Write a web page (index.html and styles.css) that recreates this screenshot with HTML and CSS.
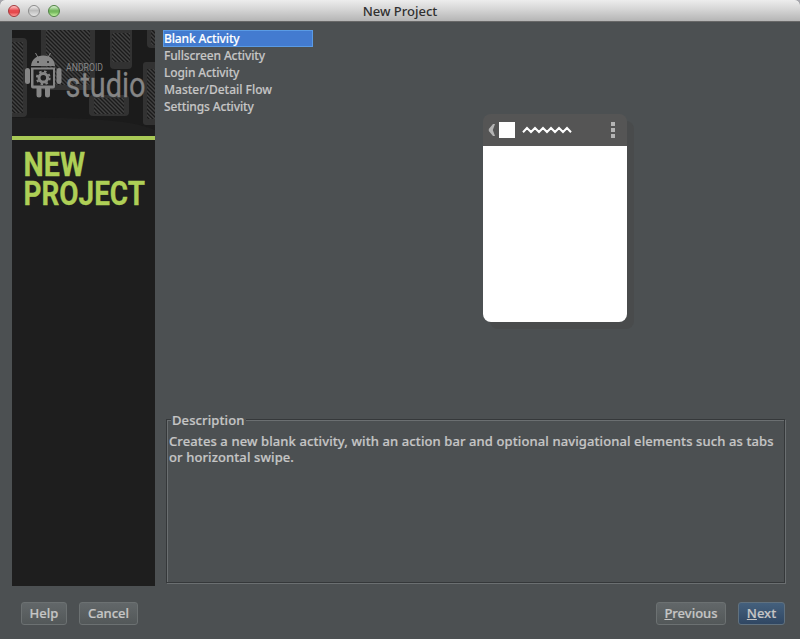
FILE: index.html
```html
<!DOCTYPE html>
<html lang="en">
<head>
<meta charset="utf-8">
<title>New Project</title>
<link rel="stylesheet" href="styles.css">
</head>
<body>
<div class="window">
  <header class="titlebar">
    <div class="lights"><i class="light red"></i><i class="light gray"></i><i class="light green"></i></div>
    <h1 class="title">New Project</h1>
  </header>
  <main class="content">
    <aside class="banner">
      <svg width="143" height="190" viewBox="12 30 143 190">
        <defs>
          <pattern id="hatch" width="4" height="4" patternUnits="userSpaceOnUse">
            <rect width="4" height="4" fill="#1b1b1b"/>
            <path d="M-1 -1L5 5M-1 3L1 5M3 -1L5 1" stroke="#424242" stroke-width="1.4"/>
          </pattern>
        </defs>
        <rect x="12" y="30" width="143" height="106" fill="#1b1b1b"/>
        <path d="M12 118Q90 117 130 123Q145 126 155 130V136H12Z" fill="#1f1f1f"/>
        <g fill="#323232">
          <rect x="2" y="38" width="25" height="79" rx="4"/>
          <rect x="41" y="22" width="54" height="68" rx="4"/>
          <rect x="110" y="22" width="22" height="47" rx="4"/>
          <rect x="147" y="22" width="20" height="26" rx="4"/>
          <rect x="89" y="95" width="40" height="21" rx="4"/>
          <rect x="143" y="62" width="20" height="63" rx="3"/>
        </g>
        <g fill="url(#hatch)">
          <rect x="12" y="42" width="11" height="71"/>
          <rect x="46" y="30" width="44" height="55"/>
          <rect x="112" y="33" width="18" height="29"/>
          <rect x="151" y="30" width="4" height="15"/>
          <rect x="94" y="98" width="30" height="16"/>
          <rect x="147" y="69" width="8" height="50"/>
        </g>
        <g fill="#858585">
          <path d="M31 66C31.500 59.500 36.500 55.500 43.300 55.500S54.500 59.500 55 66Z"/>
          <path d="M35.500 53L38 57.500M50.500 53L48 57.500" stroke="#858585" fill="none"/>
          <rect x="25" y="68" width="5" height="16" rx="2.500"/>
          <rect x="56.500" y="68" width="5" height="16" rx="2.500"/>
          <path d="M31 67.500H55V86.500Q55 88.500 53 88.500H50V95Q50 97.500 47.500 97.500T45 95V88.500H41.500V95Q41.500 97.500 39 97.500T36.500 95V88.500H33Q31 88.500 31 86.500Z"/>
        </g>
        <rect x="33.500" y="69.500" width="19.500" height="16" fill="#202020"/>
        <circle cx="43.300" cy="77.800" r="4.300" fill="none" stroke="#858585" stroke-width="3"/>
        <circle cx="43.300" cy="77.800" r="6.400" fill="none" stroke="#858585" stroke-width="2" stroke-dasharray="2.5 2.5265"/>
        <circle cx="38" cy="62" r="1" fill="#222"/><circle cx="48" cy="62" r="1" fill="#222"/>
        <text class="brand-small" x="66" y="71" textLength="37" lengthAdjust="spacingAndGlyphs">ANDROID</text>
        <text class="brand-large" x="65.500" y="97" textLength="80" lengthAdjust="spacingAndGlyphs">studio</text>
        <rect x="12" y="136" width="143" height="4" fill="#a9c956"/>
        <text class="heading" x="23.500" y="176" textLength="61.500" lengthAdjust="spacingAndGlyphs">NEW</text>
        <text class="heading" x="23.500" y="205" textLength="121.500" lengthAdjust="spacingAndGlyphs">PROJECT</text>
      </svg>
    </aside>
    <section class="body">
      <div class="top">
        <ul class="list">
          <li class="selected">Blank Activity</li>
          <li>Fullscreen Activity</li>
          <li>Login Activity</li>
          <li class="wide">Master/Detail Flow</li>
          <li>Settings Activity</li>
        </ul>
        <div class="preview">
          <svg class="phone-bar" width="144" height="32" viewBox="483 114 144 32">
            <path d="M493 124H495L492.800 130L495 136H493L488.800 131V129Z" fill="#b4b4b4"/>
            <rect x="499" y="122" width="16" height="16" fill="#fff"/>
            <path d="M523 132.300L527 128L531 132L535 128L539 132L543 128L547 132L551 128L555 132L559 128L563 132L567 128L571 132.300" fill="none" stroke="#fff" stroke-width="2"/>
            <path d="M611 122h4v4h-4zM611 128h4v4h-4zM611 134h4v4h-4z" fill="#b4b4b4"/>
          </svg>
        </div>
      </div>
      <section class="description">
        <h2>Description</h2>
        <p>Creates a new blank activity, with an action bar and optional navigational elements such as tabs<br>or horizontal swipe.</p>
      </section>
    </section>
  </main>
  <footer class="actions">
    <button class="help">Help</button>
    <button class="cancel">Cancel</button>
    <span class="spacer"></span>
    <button class="previous"><u>P</u>revious</button>
    <button class="next"><u>N</u>ext</button>
  </footer>
</div>
</body>
</html>
```
FILE: styles.css
```css
* { box-sizing: border-box; }
body { margin: 0; background: #a6a6ae; font: 500 13px/16px "Noto Sans", "Open Sans", sans-serif; color: #c6c6c6; }
.window { width: 800px; height: 639px; display: flex; flex-direction: column; background: #4c5052; border-radius: 5px 5px 0 0; overflow: hidden; }
.titlebar { height: 22px; display: grid; grid-template-columns: 1fr auto 1fr; align-items: center; background: linear-gradient(#ededed, #d8d8d8 40%, #b5b5b5); border-bottom: 1px solid #686868; }
.lights { display: flex; gap: 8px; padding-left: 8px; }
.light { width: 12px; height: 12px; border-radius: 50%; border: 1px solid #777; }
.red { background: linear-gradient(#ffc9c9, #e84b50 45%, #e5484c 65%, #ff9c98); border-color: #a3373b; }
.gray { background: linear-gradient(#eee, #bdbdbd 45%, #e4e4e4); border-color: #8b8b8b; }
.green { background: linear-gradient(#e0f5d8, #78b962 45%, #75b95c 60%, #c5f5a5); border-color: #4e8142; }
.title { margin: 0; font-size: 13px; line-height: 20px; font-weight: 500; color: #303030; }
.content { height: 564px; display: flex; padding: 8px 14px 0 12px; gap: 8px; }
.banner { width: 143px; height: 556px; background: #1e1e1e; }
.banner svg { display: block; }
.brand-small { font: 400 10.5px Roboto, sans-serif; fill: #858585; }
.brand-large { font: 400 35px Roboto, sans-serif; fill: #858585; stroke: #858585; stroke-width: 0.3px; }
.heading { font: 700 33px Roboto, sans-serif; fill: #aecf56; stroke: #aecf56; stroke-width: 0.3px; }
.body { flex: 1; display: flex; flex-direction: column; }
.top { height: 382px; display: flex; }
.list { width: 150px; margin: 0; padding: 0; list-style: none; font-size: 12px; letter-spacing: -0.13px; -webkit-text-stroke: 0.15px; }
.list li { height: 17px; line-height: 17px; padding-left: 1px; white-space: nowrap; }
.list .wide { letter-spacing: 0; }
.list .selected { color: #fff; background: #437bd0; border: 1px solid #5a9be5; padding-left: 0; line-height: 16px; }
.preview { width: 144px; height: 208px; margin: 84px 0 0 170px; border-radius: 8px; background: linear-gradient(#555 32px, #fff 32px); box-shadow: 7px 7px 0 #494b4c; }
.phone-bar { display: block; }
.description { width: 619px; height: 164px; margin: 7px 0 0 3px; border: 1px solid #35383a; box-shadow: inset 1px 1px 0 #6b6f71, 1px 1px 0 #6b6f71; white-space: nowrap; letter-spacing: 0.105px; -webkit-text-stroke: 0.2px; }
.description h2 { width: 75px; margin: -8px 0 0 4px; padding-left: 1px; font: inherit; line-height: 16px; background: #4c5052; }
.description p { margin: 5px 0 0 2px; }
.actions { height: 53px; display: flex; align-items: flex-start; padding: 16px 15px 0 21px; }
button { height: 23px; padding: 0; border: 1px solid #6c7172; border-radius: 3px; background: linear-gradient(#626769, #535859); color: #c6c6c6; font: inherit; line-height: 20px; padding-bottom: 1px; -webkit-text-stroke: 0.2px; }
.help { width: 46px; margin-right: 12px; }
.cancel { width: 59px; }
.spacer { flex: 1; }
.previous { width: 70px; margin-right: 12px; }
.next { width: 47px; background: linear-gradient(#44607d, #304763); border-color: #60717f; }
```
